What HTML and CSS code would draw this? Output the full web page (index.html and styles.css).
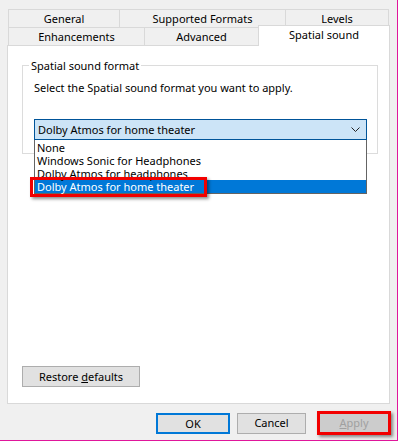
FILE: index.html
```html
<!DOCTYPE html>
<html>
<head>
<meta charset="utf-8">
<link rel="stylesheet" href="styles.css">
</head>
<body>
<div class="window">
  <div class="tabs">
    <div class="tab-row">
      <div class="tab t-general">General</div>
      <div class="tab t-formats">Supported Formats</div>
      <div class="tab t-levels">Levels</div>
    </div>
    <div class="tab-row row2">
      <div class="tab t-enh">Enhancements</div>
      <div class="tab t-adv">Advanced</div>
      <div class="tab t-spatial selected">Spatial sound</div>
    </div>
  </div>
  <div class="panel">
    <div class="group">
      <div class="legend">Spatial sound format</div>
      <div class="desc">Select the Spatial sound format you want to apply.</div>
      <div class="combo-wrap">
        <div class="combo">
          <span>Dolby Atmos for home theater</span>
          <svg class="chev" width="9" height="5" viewBox="0 0 9 5"><path d="M0.5 0.5 L4.5 4.5 L8.5 0.5" fill="none" stroke="#222" stroke-width="1"/></svg>
        </div>
        <div class="list">
          <div class="item">None</div>
          <div class="item">Windows Sonic for Headphones</div>
          <div class="item">Dolby Atmos for headphones</div>
          <div class="item sel">Dolby Atmos for home theater</div>
          <div class="hilite"></div>
        </div>
      </div>
    </div>
    <button class="btn restore">Restore <u>d</u>efaults</button>
  </div>
  <div class="actions">
    <button class="btn ok">OK</button>
    <button class="btn cancel">Cancel</button>
    <button class="btn apply"><u>A</u>pply</button>
  </div>
</div>
</body>
</html>
```
FILE: styles.css
```css
html, body {
  margin: 0;
  padding: 0;
  background: #ffffff;
}
body {
  width: 399px;
  height: 444px;
  overflow: hidden;
  font-family: "Noto Sans", "Open Sans", sans-serif;
  font-size: 11px;
  color: #000;
}
.window {
  width: 398px;
  height: 441px;
  box-sizing: border-box;
  background: #f0f0f0;
  border-right: 1px solid #e0169b;
  border-bottom: 1px solid #e0169b;
  padding-top: 9px;
}
.tabs {
  margin-left: 8px;
}
.tab-row {
  display: flex;
  height: 18px;
}
.tab {
  box-sizing: border-box;
  height: 18px;
  border-top: 1px solid #d9d9d9;
  border-left: 1px solid #d9d9d9;
  background: #f0f0f0;
  text-align: center;
  line-height: 17px;
}
.t-general { width: 111px; }
.t-formats { width: 166px; }
.t-levels { width: 104px; border-right: 1px solid #d9d9d9; }
.t-enh { width: 136px; }
.t-adv { width: 114px; }
.t-spatial { width: 132px; }
.tab.selected {
  position: relative;
  z-index: 2;
  height: 21px;
  margin-top: -2px;
  background: #fff;
  border-right: 1px solid #d9d9d9;
  line-height: 17px;
}
.panel {
  margin-left: 7px;
  width: 383px;
  height: 359px;
  box-sizing: border-box;
  border: 1px solid #d9d9d9;
  background: #fff;
  padding: 19px 0 0 14px;
}
.group {
  width: 356px;
  height: 89px;
  box-sizing: border-box;
  border: 1px solid #dcdcdc;
}
.legend {
  width: fit-content;
  margin-top: -8px;
  margin-left: 6px;
  padding: 0 2px;
  background: #fff;
  line-height: 15px;
}
.desc {
  margin-top: 7px;
  margin-left: 11px;
  line-height: 15px;
}
.combo-wrap {
  position: relative;
  margin-top: 24px;
  margin-left: 11px;
  width: 333px;
}
.combo {
  box-sizing: border-box;
  height: 21px;
  border: 1px solid #005499;
  background: #cce4f7;
  display: flex;
  align-items: center;
  justify-content: space-between;
  padding: 0 6px 0 3px;
}
.chev { display: block; }
.list {
  position: absolute;
  z-index: 3;
  left: 0;
  top: 21px;
  width: 333px;
  box-sizing: border-box;
  border: 1px solid #646464;
  border-top: none;
  background: #fff;
  padding-top: 1px;
}
.item {
  height: 13px;
  line-height: 13px;
  padding-left: 2px;
  white-space: nowrap;
}
.item.sel {
  background: #0078d7;
  color: #fff;
}
.hilite {
  position: absolute;
  left: -5px;
  top: 37px;
  width: 177px;
  height: 20px;
  box-sizing: border-box;
  border: 3px solid #f20000;
  box-shadow: 2px 2px 3px rgba(0,0,0,0.45);
}
.btn {
  font-family: inherit;
  font-size: 11px;
  color: #000;
  box-sizing: border-box;
  height: 21px;
  border: 1px solid #adadad;
  background: #e1e1e1;
  padding: 0;
  margin: 0;
  line-height: 18px;
}
.restore {
  display: block;
  margin-top: 212px;
  width: 118px;
}
.actions {
  display: flex;
  align-items: center;
  margin-top: 7px;
  padding-left: 156px;
  height: 24px;
}
.ok {
  width: 74px;
  border: 2px solid #0078d7;
}
.cancel {
  width: 69px;
  margin-left: 7px;
}
.apply {
  width: 74px;
  height: 24px;
  margin-left: 11px;
  border: 3px solid #f20000;
  background: #cccccc;
  color: #a0a0a0;
  box-shadow: 2px 2px 3px rgba(0,0,0,0.45);
}
```
